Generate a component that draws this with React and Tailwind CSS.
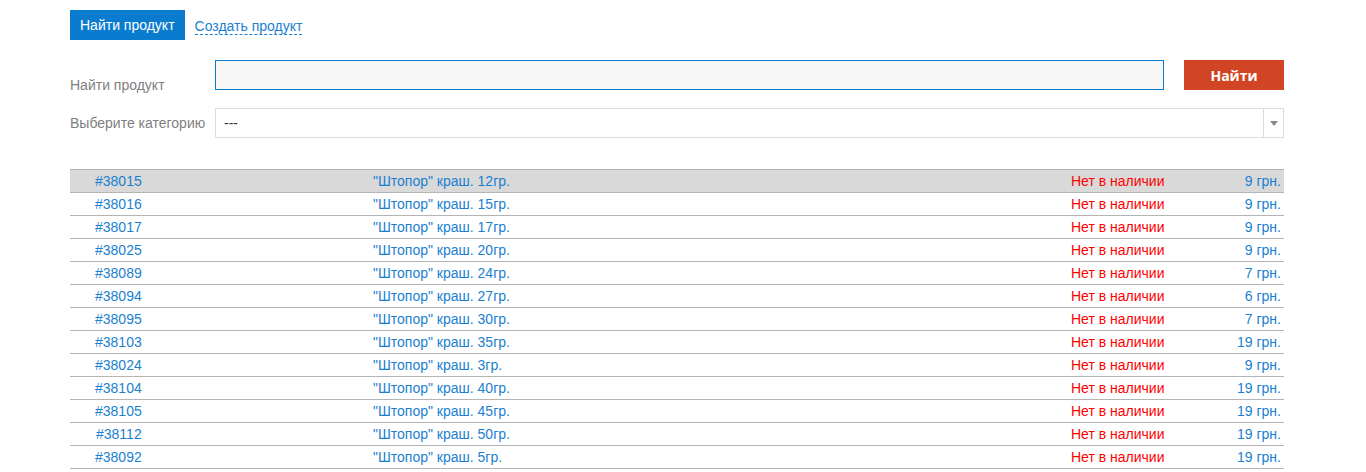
import React from "react";

const rows = [
  ["#38015", "\"Штопор\" краш. 12гр.", "9 грн."],
  ["#38016", "\"Штопор\" краш. 15гр.", "9 грн."],
  ["#38017", "\"Штопор\" краш. 17гр.", "9 грн."],
  ["#38025", "\"Штопор\" краш. 20гр.", "9 грн."],
  ["#38089", "\"Штопор\" краш. 24гр.", "7 грн."],
  ["#38094", "\"Штопор\" краш. 27гр.", "6 грн."],
  ["#38095", "\"Штопор\" краш. 30гр.", "7 грн."],
  ["#38103", "\"Штопор\" краш. 35гр.", "19 грн."],
  ["#38024", "\"Штопор\" краш. 3гр.", "9 грн."],
  ["#38104", "\"Штопор\" краш. 40гр.", "19 грн."],
  ["#38105", "\"Штопор\" краш. 45гр.", "19 грн."],
  ["#38112", "\"Штопор\" краш. 50гр.", "19 грн."],
  ["#38092", "\"Штопор\" краш. 5гр.", "19 грн."],
];

export default function App() {
  return (
    <div className="w-[1366px] h-[472px] bg-white overflow-hidden font-['Liberation_Sans',Arial,sans-serif] text-[14px]">
      <div className="ml-[70px] w-[1214px] pt-[10px]">
        <div className="flex items-center h-[30px]">
          <div className="h-[30px] px-[10px] bg-[#0a7ccf] text-white flex items-center leading-none">
            Найти продукт
          </div>
          <span className="ml-[10px] text-[#1a7fd0] border-b border-dashed border-[#1a7fd0] leading-[16px] mt-[2px]">
            Создать продукт
          </span>
        </div>

        <div className="flex mt-[20px] h-[30px]">
          <div className="w-[145px] text-[#808080] pt-[15px] leading-[20px]">Найти продукт</div>
          <div className="w-[949px] h-[30px] border border-[#0a7ccf] bg-[#f7f7f7]"></div>
          <button className="ml-[20px] w-[100px] h-[30px] bg-[#d14424] text-white font-bold font-['Open_Sans',sans-serif] text-[14px]">
            Найти
          </button>
        </div>

        <div className="flex items-center mt-[18px] h-[30px]">
          <div className="w-[145px] text-[#808080]">Выберите категорию</div>
          <div className="flex-1 h-[30px] border border-[#dcdcdc] flex items-center">
            <span className="flex-1 pl-[8px] text-[#333]">---</span>
            <div className="w-[20px] h-full border-l border-[#dcdcdc] flex items-center justify-center">
              <div className="w-0 h-0 border-l-[4px] border-r-[4px] border-t-[5px] border-l-transparent border-r-transparent border-t-[#888]"></div>
            </div>
          </div>
        </div>

        <div className="mt-[31px] border-t border-[#b4b4b4]">
          {rows.map((r, i) => (
            <div
              key={r[0]}
              className={`flex items-center h-[23px] border-b border-[#b4b4b4] ${i === 0 ? "bg-[#d9d9d9]" : ""}`}
            >
              <span className={`w-[303px] text-[#1a7fd0] ${r[0] === "#38112" ? "pl-[26px]" : "pl-[25px]"}`}>{r[0]}</span>
              <span className="w-[698px] text-[#1a7fd0]">{r[1]}</span>
              <span className="w-[110px] text-[#ff0000]">Нет в наличии</span>
              <span className="flex-1 text-right pr-[3px] text-[#1a7fd0]">{r[2]}</span>
            </div>
          ))}
        </div>
      </div>
    </div>
  );
}
